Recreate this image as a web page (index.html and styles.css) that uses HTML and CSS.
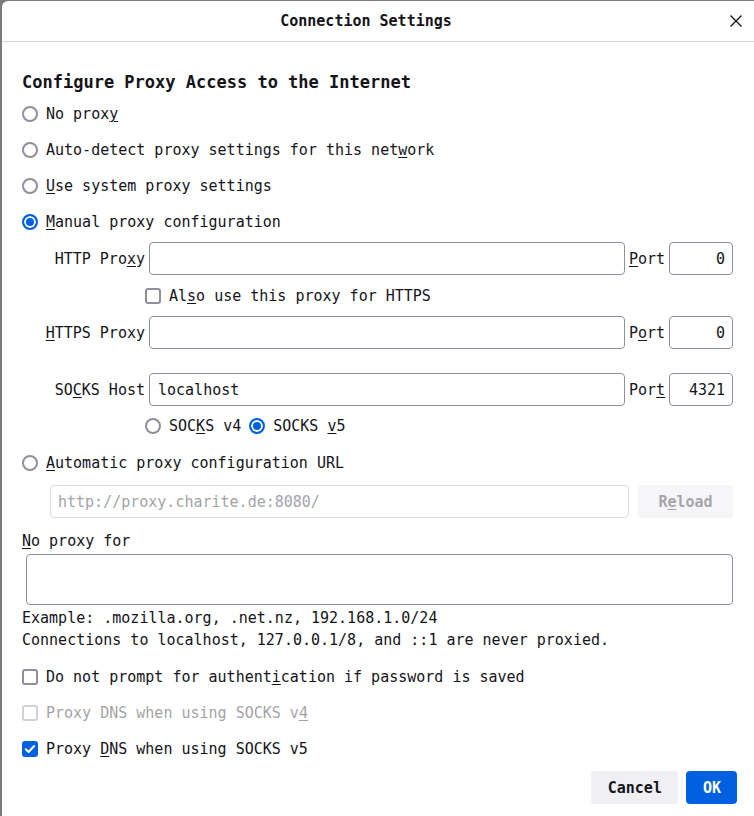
FILE: index.html
```html
<!DOCTYPE html>
<html>
<head>
<meta charset="utf-8">
<title>Connection Settings</title>
<link rel="stylesheet" href="styles.css">
</head>
<body>
<div class="dialog">
  <div class="titlebar">
    <div class="title">Connection Settings</div>
    <span class="close"><svg width="12" height="12" viewBox="0 0 12 12"><path d="M0.5 0.5L11.5 11.5M11.5 0.5L0.5 11.5" stroke="#15141a" stroke-width="1.3" fill="none"/></svg></span>
  </div>
  <div class="content">
    <h1 class="heading">Configure Proxy Access to the Internet</h1>
    <label class="opt"><input type="radio" class="radio" name="p"><span>No prox<u>y</u></span></label>
    <label class="opt"><input type="radio" class="radio" name="p"><span>Auto-detect proxy settings for this net<u>w</u>ork</span></label>
    <label class="opt"><input type="radio" class="radio" name="p"><span><u>U</u>se system proxy settings</span></label>
    <label class="opt"><input type="radio" class="radio" name="p" checked><span><u>M</u>anual proxy configuration</span></label>

    <div class="prow first">
      <span class="plabel">HTTP Pro<u>x</u>y</span>
      <input class="field" type="text" value="">
      <span class="portlabel"><u>P</u>ort</span>
      <input class="field port" type="text" value="0">
    </div>
    <div class="subopt tall">
      <span class="cb"></span><span>Al<u>s</u>o use this proxy for HTTPS</span>
    </div>
    <div class="prow">
      <span class="plabel"><u>H</u>TTPS Proxy</span>
      <input class="field" type="text" value="">
      <span class="portlabel">P<u>o</u>rt</span>
      <input class="field port" type="text" value="0">
    </div>
    <div class="prow socks">
      <span class="plabel">SO<u>C</u>KS Host</span>
      <input class="field" type="text" value="localhost">
      <span class="portlabel">Por<u>t</u></span>
      <input class="field port" type="text" value="4321">
    </div>
    <div class="subopt">
      <input type="radio" class="radio" name="s"><span>SOC<u>K</u>S v4</span>
      <input type="radio" class="radio" name="s" checked><span>SOCKS <u>v</u>5</span>
    </div>

    <label class="opt"><input type="radio" class="radio" name="p"><span><u>A</u>utomatic proxy configuration URL</span></label>
    <div class="urlrow">
      <input class="field url" type="text" value="http://proxy.charite.de:8080/" disabled>
      <button class="reload" disabled>R<u>e</u>load</button>
    </div>

    <div class="noproxy"><u>N</u>o proxy for</div>
    <textarea class="area"></textarea>
    <div class="help">
      <div class="line">Example: .mozilla.org, .net.nz, 192.168.1.0/24</div>
      <div class="line">Connections to localhost, 127.0.0.1/8, and ::1 are never proxied.</div>
    </div>

    <div class="checks">
      <div class="opt"><span class="cb"></span><span>Do not prompt for authent<u>i</u>cation if password is saved</span></div>
      <div class="opt disabled"><span class="cb"></span><span>Proxy DNS when using SOCKS v<u>4</u></span></div>
      <div class="opt"><span class="cb on"><svg width="12" height="12" viewBox="0 0 12 12"><path d="M1.8 6.2L4.6 9L10.2 3" stroke="#fff" stroke-width="2" fill="none" stroke-linecap="round" stroke-linejoin="round"/></svg></span><span>Proxy <u>D</u>NS when using SOCKS v5</span></div>
    </div>

    <div class="footer">
      <button class="btn cancel">Cancel</button>
      <button class="btn ok">OK</button>
    </div>
  </div>
</div>
</body>
</html>
```
FILE: styles.css
```css
* { box-sizing: border-box; }
html, body { margin: 0; height: 100%; }
body {
  background: #7b7b7b;
  font-family: "DejaVu Sans Mono", "Liberation Mono", monospace;
  font-size: 15px;
  color: #15141a;
  overflow: hidden;
}
u { text-decoration: underline; text-underline-offset: 2px; text-decoration-thickness: 1px; }

.dialog {
  margin: 1px 0 0 2px;
  height: 815px;
  background: #fff;
  border-top-left-radius: 6px;
  display: flex;
  flex-direction: column;
}
.titlebar {
  height: 41px;
  flex: none;
  border-bottom: 1px solid #d4d4d8;
  display: flex;
  align-items: center;
}
.title {
  flex: 1;
  text-align: center;
  font-weight: bold;
}
.close {
  width: 12px;
  height: 12px;
  margin-right: 12px;
  margin-bottom: 1px;
  display: flex;
}

.content {
  padding: 0 21px 0 20px;
}
.heading {
  margin: 24px 0 0;
  height: 29px;
  line-height: 33px;
  font-size: 17px;
  font-weight: bold;
}
.opt {
  height: 36px;
  padding-top: 2px;
  display: flex;
  align-items: center;
  gap: 8px;
  white-space: pre;
}
.opt.disabled { opacity: 0.4; }

.radio {
  appearance: none;
  -webkit-appearance: none;
  width: 16px;
  height: 16px;
  margin: 0;
  border: 2px solid #8f8f9d;
  border-radius: 50%;
  background: #fff;
  flex: none;
}
.radio:checked {
  border-color: #0061e0;
  background: #0061e0;
  box-shadow: inset 0 0 0 2px #fff;
}

.cb {
  width: 16px;
  height: 16px;
  border: 2px solid #8f8f9d;
  border-radius: 3px;
  flex: none;
  display: flex;
  align-items: center;
  justify-content: center;
  background: #fff;
}
.cb.on {
  background: #0061e0;
  border-color: #0061e0;
}

.prow {
  display: grid;
  grid-template-columns: 123px 1fr 36px 64px;
  column-gap: 4px;
  align-items: center;
  height: 33px;
  margin-top: 1px;
}
.prow.first { margin-top: 3px; }
.prow.socks { margin-top: 24px; }
.plabel { justify-self: end; white-space: pre; }
.portlabel { white-space: pre; }

.field {
  height: 33px;
  width: 100%;
  border: 1px solid #8f8f9d;
  border-radius: 4px;
  font: inherit;
  color: inherit;
  padding: 0 8px;
  background: #fff;
  outline: none;
}
.port { text-align: right; padding-right: 7px; }

.subopt {
  height: 38px;
  padding-top: 2px;
  padding-left: 123px;
  display: flex;
  align-items: center;
  gap: 8px;
  white-space: pre;
}
.subopt.tall { height: 40px; }

.urlrow {
  margin-top: 5px;
  padding-left: 28px;
  display: flex;
  gap: 9px;
  height: 33px;
}
.url {
  flex: 1;
  border-color: #dcdce0;
  color: #a3a3a8;
  padding-left: 7px;
}
.reload {
  width: 95px;
  height: 33px;
  border: none;
  border-radius: 4px;
  background: #f6f6f8;
  color: #a6a6aa;
  font: inherit;
  font-weight: bold;
}

.noproxy {
  margin-top: 10px;
  height: 24px;
  line-height: 26px;
}
.area {
  display: block;
  margin: 2px 0 0 4px;
  width: calc(100% - 4px);
  height: 51px;
  border: 1px solid #8f8f9d;
  border-radius: 4px;
  resize: none;
  font: inherit;
  outline: none;
}
.help {
  margin-top: 2px;
  line-height: 22px;
}
.line { white-space: pre; }
.checks { margin-top: 7px; }

.footer {
  margin-top: 5px;
  margin-right: -4px;
  display: flex;
  justify-content: flex-end;
  gap: 8px;
}
.btn {
  height: 33px;
  border: none;
  border-radius: 4px;
  padding: 0 16px;
  font: inherit;
  font-weight: bold;
}
.cancel { background: #f0f0f4; color: #15141a; padding: 0 16px 0 17px; }
.ok { background: #0061e0; color: #fff; padding: 0 16px 0 17px; }
```
